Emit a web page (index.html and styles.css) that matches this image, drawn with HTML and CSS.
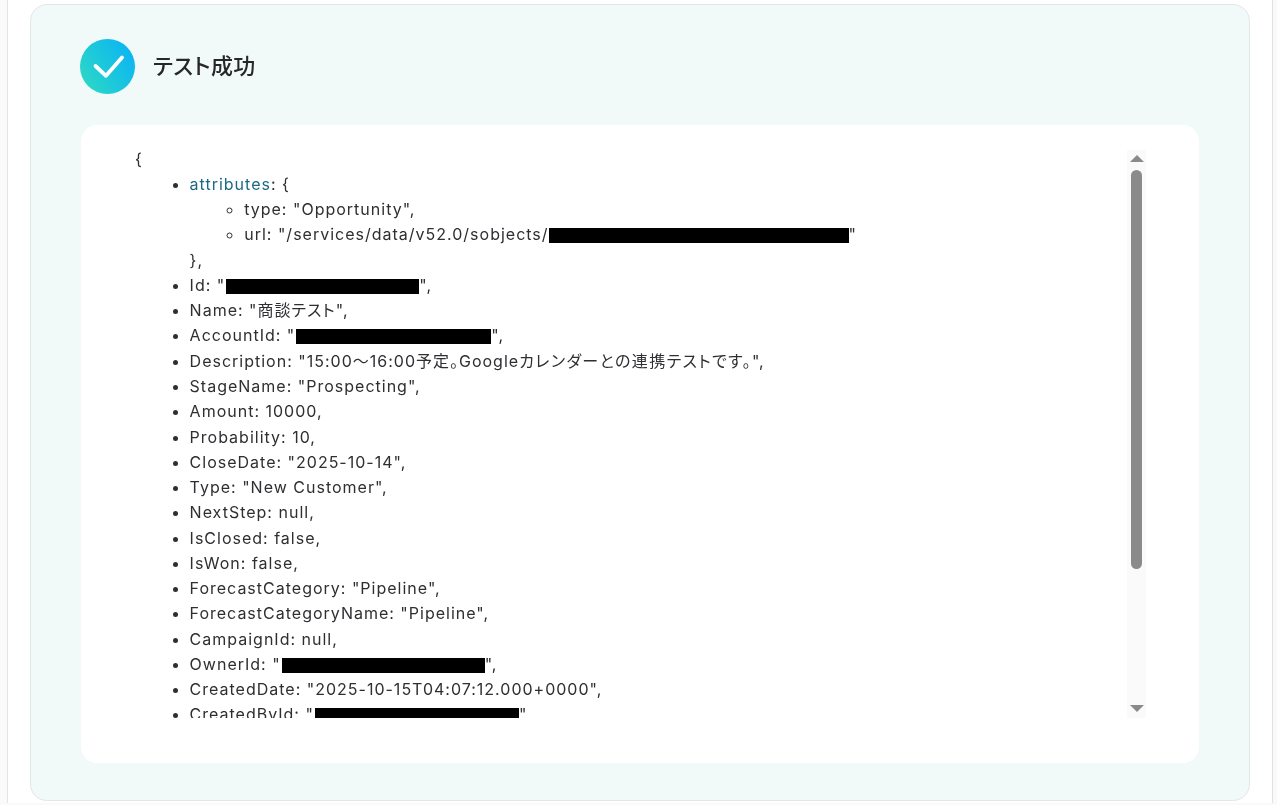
FILE: index.html
```html
<!DOCTYPE html>
<html lang="ja">
<head>
<meta charset="utf-8">
<title>テスト成功</title>
<link rel="stylesheet" href="styles.css">
</head>
<body>
<div class="page">
  <section class="card">
    <header class="head">
      <svg class="check" viewBox="0 0 55 55" width="55" height="55" aria-hidden="true">
        <defs>
          <linearGradient id="g" x1="0" y1="1" x2="1" y2="0.35">
            <stop offset="0" stop-color="#2fdcc0"/>
            <stop offset="1" stop-color="#0db6f2"/>
          </linearGradient>
        </defs>
        <circle cx="27.5" cy="27.5" r="27.5" fill="url(#g)"/>
        <path d="M15.5 27 L26 36.8 L42 18.5" fill="none" stroke="#fff" stroke-width="3.8" stroke-linecap="round" stroke-linejoin="round"/>
      </svg>
      <h1 class="title">テスト成功</h1>
    </header>
    <div class="panel">
      <div class="scroller">
        <div class="json">
          <div>{</div>
          <ul class="list">
            <li><span class="key">attributes</span>: {
              <ul class="sub">
                <li>type: "Opportunity",</li>
                <li>url: "/services/data/v52.0/sobjects/<span class="mask mask-url"></span>"</li>
              </ul>
              },
            </li>
            <li>Id: "<span class="mask mask-id"></span>",</li>
            <li>Name: "商談テスト",</li>
            <li>AccountId: "<span class="mask mask-account"></span>",</li>
            <li>Description: "15:00〜16:00予定。Google<span class="wide">カレンダーとの連携テストです。</span>",</li>
            <li>StageName: "Prospecting",</li>
            <li>Amount: 10000,</li>
            <li>Probability: 10,</li>
            <li>CloseDate: "2025-10-14",</li>
            <li>Type: "New Customer",</li>
            <li>NextStep: null,</li>
            <li>IsClosed: false,</li>
            <li>IsWon: false,</li>
            <li>ForecastCategory: "Pipeline",</li>
            <li>ForecastCategoryName: "Pipeline",</li>
            <li>CampaignId: null,</li>
            <li>OwnerId: "<span class="mask mask-owner"></span>",</li>
            <li>CreatedDate: "2025-10-15T04:07:12.000+0000",</li>
            <li>CreatedById: "<span class="mask mask-created"></span>"</li>
          </ul>
        </div>
        <div class="bar" aria-hidden="true">
          <span class="arrow arrow-up"></span>
          <span class="thumb"></span>
          <span class="arrow arrow-down"></span>
        </div>
      </div>
    </div>
  </section>
</div>
</body>
</html>
```
FILE: styles.css
```css
* { box-sizing: border-box; }
html, body { margin: 0; height: 805px; overflow: hidden; background: #fafafa; }
body { font-family: Inter, "Noto Sans CJK JP", sans-serif; color: #2f2f33; font-feature-settings: "palt"; }
.page {
  margin-left: 7px;
  width: 1266px;
  height: 803px;
  padding: 4px 22px 0;
  background: #fff;
  border-left: 1px solid #e2e4e8;
  border-right: 1px solid #dfe2e8;
}
.card {
  height: 797px;
  padding: 34px 50px 37px;
  background: #f1faf9;
  border: 1px solid #e2e6e6;
  border-radius: 17px;
}
.head { display: flex; align-items: center; gap: 18px; margin-left: -1px; height: 55px; }
.check { flex: none; }
.title {
  margin: 0 0 5px;
  font-family: Inter, "Noto Sans CJK JP", sans-serif;
  font-size: 22px;
  font-weight: 500;
  letter-spacing: .4px;
  color: #27272a;
  will-change: transform;
}
.panel {
  height: 638px;
  margin-top: 31px;
  padding: 21px 53px 48px 54px;
  background: #fff;
  border-radius: 16px;
}
.scroller { display: flex; height: 572px; overflow: hidden; }
.json {
  flex: 1;
  overflow: hidden;
  padding-top: .6px;
  font-size: 16px;
  line-height: 25.27px;
  letter-spacing: 1px;
  will-change: transform;
}
.list { margin: 0; padding-left: 54.6px; list-style: disc; }
.sub { margin: 0; padding-left: 54.6px; list-style: circle; }
.key { color: #1a6a85; }
.wide { letter-spacing: 1.4px; }
.mask { display: inline-block; height: 15px; margin-left: 1px; background: #000; vertical-align: -3px; }
.mask-url { width: 300px; margin-left: 0; }
.mask-id { width: 193px; }
.mask-account { width: 195px; }
.mask-owner { width: 203px; }
.mask-created { width: 204px; }
.bar {
  flex: none;
  width: 19px;
  height: 568px;
  margin-top: 4px;
  display: flex;
  flex-direction: column;
  align-items: center;
  background: #fafafa;
  position: relative;
}
.arrow { width: 0; height: 0; border-left: 7px solid transparent; border-right: 7px solid transparent; }
.arrow-up { margin-top: 5px; border-bottom: 7px solid #8a8a8a; }
.arrow-down { position: absolute; bottom: 6px; border-top: 7px solid #8a8a8a; }
.thumb { width: 11px; height: 399px; margin-top: 8px; background: #8a8a8a; border-radius: 6px; }
```
